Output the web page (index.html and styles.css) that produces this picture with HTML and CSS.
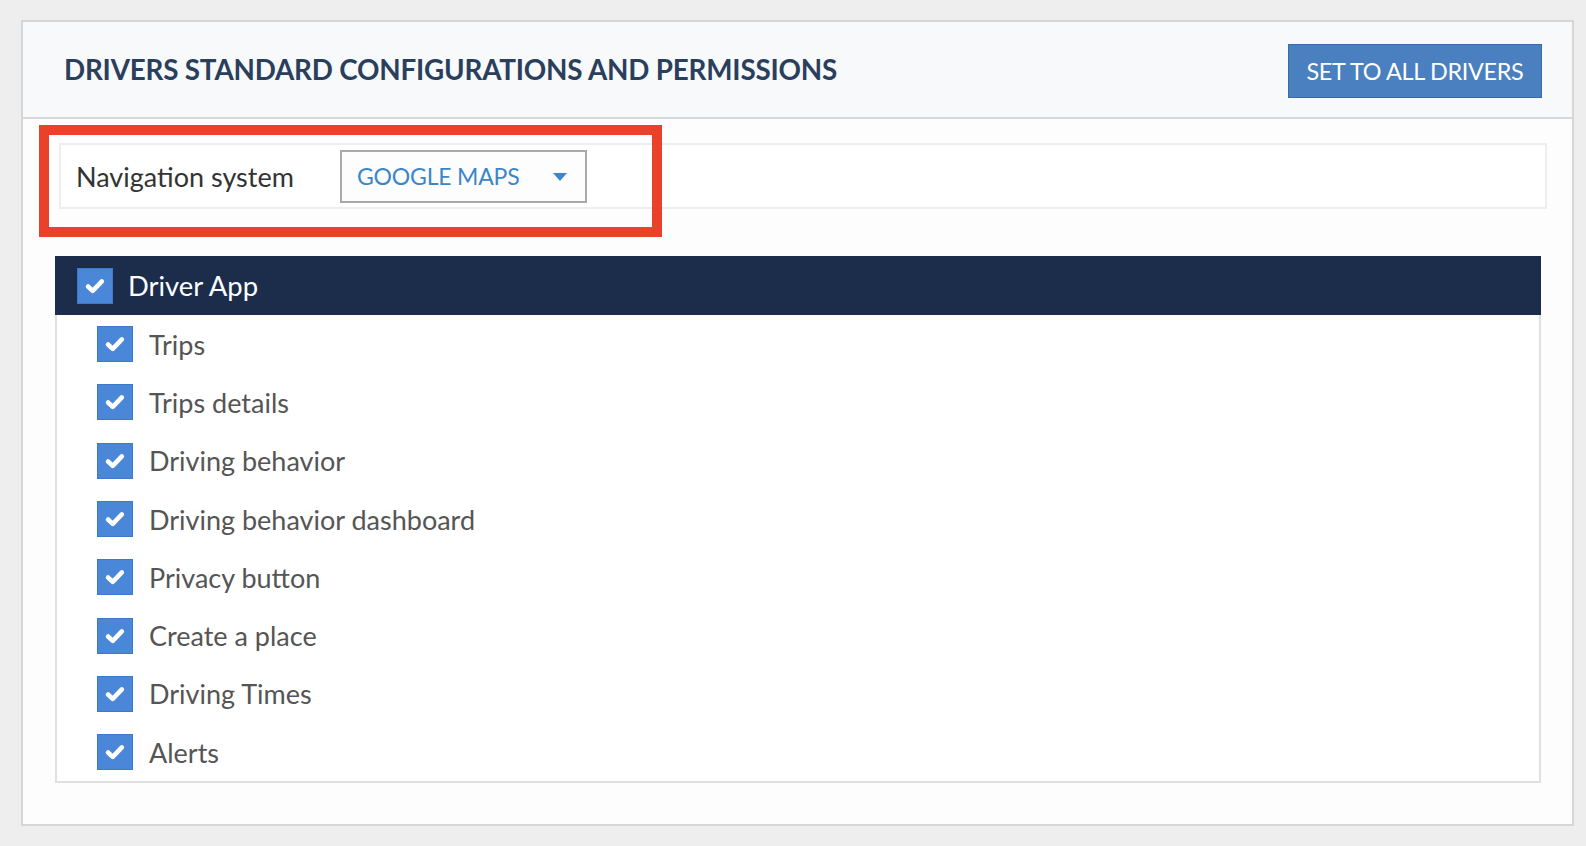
FILE: index.html
```html
<!DOCTYPE html>
<html lang="en">
<head>
<meta charset="utf-8">
<title>Drivers standard configurations and permissions</title>
<link rel="stylesheet" href="styles.css">
</head>
<body>
<section class="panel">
  <header class="panel-head">
    <h1 class="panel-title">DRIVERS STANDARD CONFIGURATIONS AND PERMISSIONS</h1>
    <button class="btn-primary" type="button">SET TO ALL DRIVERS</button>
  </header>

  <div class="panel-body">
    <div class="nav-row">
      <span class="nav-label">Navigation system</span>
      <div class="select">
        <span class="select-value">GOOGLE MAPS</span>
        <svg class="select-caret" width="14" height="8" viewBox="0 0 14 8"><path d="M0 0h14L7 8z" fill="#3b86c8"/></svg>
      </div>
      <div class="highlight"></div>
    </div>

    <div class="tree">
      <div class="tree-head">
        <span class="check"><svg viewBox="0 0 20 20"><path d="M4.2 10.4l3.9 3.7 7.6-7.9" fill="none" stroke="#fff" stroke-width="3.8" stroke-linecap="round" stroke-linejoin="round"/></svg></span>
        <span class="tree-head-label">Driver App</span>
      </div>
      <ul class="tree-list">
        <li class="tree-item"><span class="check"><svg viewBox="0 0 20 20"><path d="M4.2 10.4l3.9 3.7 7.6-7.9" fill="none" stroke="#fff" stroke-width="3.8" stroke-linecap="round" stroke-linejoin="round"/></svg></span>Trips</li>
        <li class="tree-item"><span class="check"><svg viewBox="0 0 20 20"><path d="M4.2 10.4l3.9 3.7 7.6-7.9" fill="none" stroke="#fff" stroke-width="3.8" stroke-linecap="round" stroke-linejoin="round"/></svg></span>Trips details</li>
        <li class="tree-item"><span class="check"><svg viewBox="0 0 20 20"><path d="M4.2 10.4l3.9 3.7 7.6-7.9" fill="none" stroke="#fff" stroke-width="3.8" stroke-linecap="round" stroke-linejoin="round"/></svg></span>Driving behavior</li>
        <li class="tree-item"><span class="check"><svg viewBox="0 0 20 20"><path d="M4.2 10.4l3.9 3.7 7.6-7.9" fill="none" stroke="#fff" stroke-width="3.8" stroke-linecap="round" stroke-linejoin="round"/></svg></span>Driving behavior dashboard</li>
        <li class="tree-item"><span class="check"><svg viewBox="0 0 20 20"><path d="M4.2 10.4l3.9 3.7 7.6-7.9" fill="none" stroke="#fff" stroke-width="3.8" stroke-linecap="round" stroke-linejoin="round"/></svg></span>Privacy button</li>
        <li class="tree-item"><span class="check"><svg viewBox="0 0 20 20"><path d="M4.2 10.4l3.9 3.7 7.6-7.9" fill="none" stroke="#fff" stroke-width="3.8" stroke-linecap="round" stroke-linejoin="round"/></svg></span>Create a place</li>
        <li class="tree-item"><span class="check"><svg viewBox="0 0 20 20"><path d="M4.2 10.4l3.9 3.7 7.6-7.9" fill="none" stroke="#fff" stroke-width="3.8" stroke-linecap="round" stroke-linejoin="round"/></svg></span>Driving Times</li>
        <li class="tree-item"><span class="check"><svg viewBox="0 0 20 20"><path d="M4.2 10.4l3.9 3.7 7.6-7.9" fill="none" stroke="#fff" stroke-width="3.8" stroke-linecap="round" stroke-linejoin="round"/></svg></span>Alerts</li>
      </ul>
    </div>
  </div>
</section>
</body>
</html>
```
FILE: styles.css
```css
* { box-sizing: border-box; }

html, body {
  margin: 0;
  height: 100%;
}

body {
  background: #eeeeee;
  font-family: Lato, "Open Sans", "Liberation Sans", sans-serif;
  padding: 20px 0 0 21px;
}

.panel {
  width: 1553px;
  height: 806px;
  background: #fdfdfd;
  border: 2px solid #d6d6d6;
  display: flex;
  flex-direction: column;
}

.panel-head {
  height: 97px;
  flex: none;
  background: #f8f9fa;
  border-bottom: 2px solid #d8d8d8;
  display: flex;
  align-items: center;
  justify-content: space-between;
  padding: 0 30px 0 41px;
}

.panel-title {
  margin: 0;
  font-size: 27.8px;
  font-weight: 700;
  color: #2a3f5c;
  letter-spacing: -0.2px;
}

.btn-primary {
  width: 254px;
  height: 54px;
  background: #4a7fc0;
  border: 1px solid #3c6aa5;
  color: #fff;
  font-family: inherit;
  font-size: 23.4px;
  font-weight: 400;
  letter-spacing: -0.3px;
  padding: 0;
  margin-top: 2px;
}

.panel-body {
  padding: 24px 0 0 0;
}

.nav-row {
  position: relative;
  margin-left: 36px;
  width: 1488px;
  height: 66px;
  border: 2px solid #eeeeee;
  background: #fff;
  display: flex;
  align-items: center;
  padding-left: 15px;
}

.nav-label {
  font-size: 27px;
  color: #333;
  width: 264px;
  flex: none;
}

.select {
  width: 247px;
  height: 53px;
  border: 2px solid #a7a9ad;
  background: #fdfdfd;
  display: flex;
  align-items: center;
  justify-content: space-between;
  padding: 0 18px 0 15px;
}

.select-value {
  font-size: 23px;
  color: #3b86c8;
  letter-spacing: -0.2px;
}

.select-caret { display: block; margin-top: 2px; }

/* red annotation frame around the navigation setting */
.highlight {
  position: absolute;
  left: -22px;
  top: -20px;
  width: 623px;
  height: 112px;
  border: 10px solid #e9412a;
  pointer-events: none;
}

.tree {
  margin: 47px 0 0 32px;
  width: 1486px;
  height: 527px;
  border: 2px solid #e0e0e0;
  background: #fff;
}

.tree-head {
  height: 59px;
  margin: -2px -2px 0 -2px;
  background: #1b2d4b;
  display: flex;
  align-items: center;
  padding-left: 22px;
}

.tree-head-label {
  font-size: 27.4px;
  color: #fff;
  margin-left: 15px;
}

.check {
  width: 36px;
  height: 36px;
  flex: none;
  background: #4a87d9;
  border: 1px solid #3f78c4;
  display: flex;
  align-items: center;
  justify-content: center;
}

.check svg { width: 24px; height: 24px; display: block; }

.tree-list {
  list-style: none;
  margin: 0;
  padding: 0 0 0 40px;
}

.tree-item {
  height: 58.3px;
  display: flex;
  align-items: center;
  font-size: 27px;
  color: #555;
}

.tree-item .check { margin-right: 16px; }
```
